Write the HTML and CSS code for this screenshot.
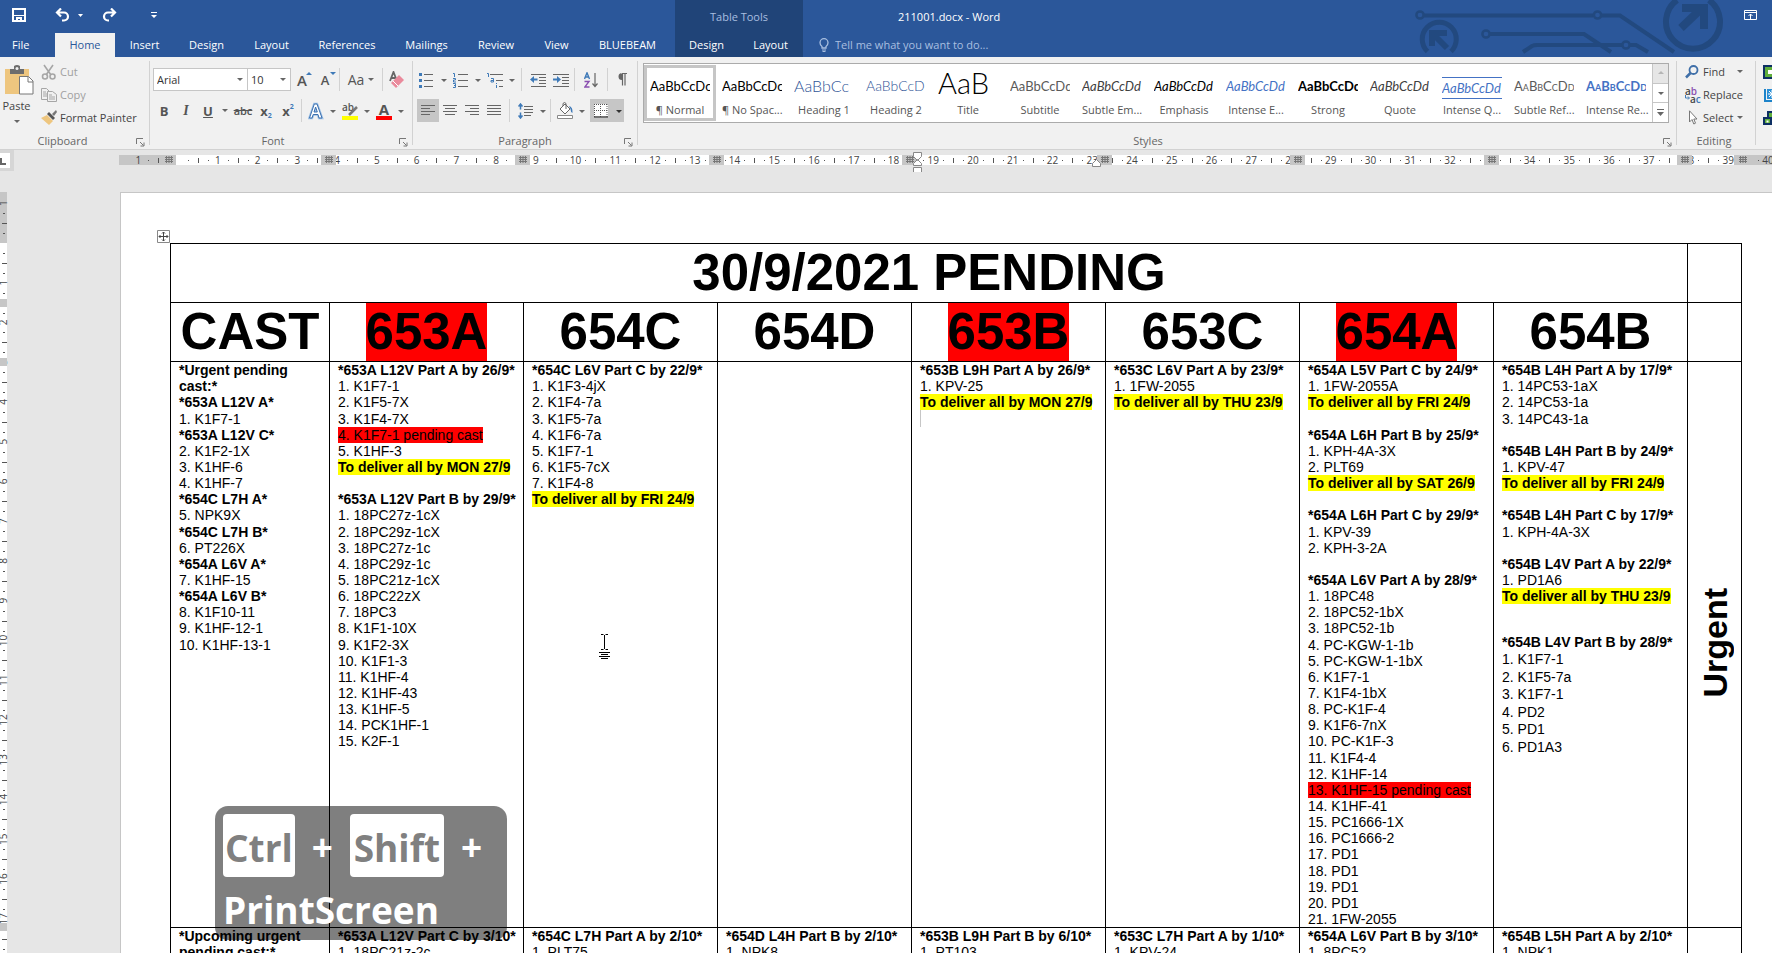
FILE: index.html
```html
<!DOCTYPE html>
<html lang="en">
<head>
<meta charset="utf-8">
<title>211001.docx - Word</title>
<link rel="stylesheet" href="styles.css">
</head>
<body>
<header class="top">
  <svg class="circuit" width="362" height="57" viewBox="0 0 362 57" fill="none" stroke="#22497f" aria-hidden="true">
    <g stroke-width="4">
      <circle cx="10" cy="15" r="3.6" stroke-width="2.5"/><path d="M14 15.500H183"/><circle cx="187.500" cy="15" r="3.600" stroke-width="2.500"/><path d="M191 15.500H210L264 52"/>
      <circle cx="76" cy="34" r="3.600" stroke-width="2.500"/><path d="M80 34H174L201 52"/>
      <path d="M113 52L122 46Q124 45 127 45H212"/><circle cx="216" cy="45" r="3.600" stroke-width="2.500"/><path d="M220 45H226L238 52"/>
    </g>
    <path d="M17.500 51.500A17 17 0 1 1 41 51.500" stroke-width="5"/>
    <path d="M37 48L23 34M22 46V33H37" stroke-width="6"/>
    <path d="M267 0A27 27 0 1 0 299 0" stroke-width="6"/>
    <path d="M271 28L293 7M272 8H294V29" stroke-width="8"/>
  </svg>
  <div class="titlebar">
    <div class="quick">
      <button class="q save" aria-label="Save"><svg width="14" height="14" viewBox="0 0 14 14"><path d="M1 1h12v12H1z" fill="none" stroke="#fff" stroke-width="2"/><path d="M2 7h10v1H2zM4 9h6v4H8v-2H6v2H4z" fill="#fff"/></svg></button>
      <button class="q undo" aria-label="Undo"><svg width="29" height="14" viewBox="0 0 29 14"><path d="M2 4.500H9A4 4 0 0 1 9 12.500H7M6 0.500L2 4.500L6 8.500" fill="none" stroke="#fff" stroke-width="2.200"/><path d="M23 6h5l-2.500 3z" fill="#fff"/></svg></button>
      <button class="q redo" aria-label="Redo"><svg width="15" height="14" viewBox="0 0 15 14"><path d="M13 4.500H6A4 4 0 0 0 6 12.500H7M9 0.500L13 4.500L9 8.500" fill="none" stroke="#fff" stroke-width="2.200"/></svg></button>
      <button class="q" aria-label="Customize Quick Access Toolbar"><svg width="7" height="7" viewBox="0 0 7 7"><path d="M0 0h6v1H0zM0 3h6L3 6z" fill="#fff"/></svg></button>
    </div>
    <div class="context">Table Tools</div>
    <h1 class="doc-title">211001.docx - Word</h1>
    <button class="q display" aria-label="Ribbon Display Options"><svg width="13" height="10" viewBox="0 0 13 10"><path d="M.5.5h12v9H.5zM1 2.500h11M6.500 9V4M4.500 6L6.500 4L8.500 6" fill="none" stroke="#fff"/></svg></button>
  </div>
  <nav class="tabs">
    <button class="file">File</button><button class="active">Home</button><button>Insert</button><button>Design</button><button>Layout</button><button>References</button><button>Mailings</button><button>Review</button><button>View</button><button class="last">BLUEBEAM</button><button class="ctx">Design</button><button class="ctx">Layout</button>
    <label class="tell"><svg width="10" height="14" viewBox="0 0 10 14" fill="none" stroke="#a9bfe0"><path d="M3 10V8.500Q1 7 1 4.700A4 4 0 0 1 9 4.700Q9 7 7 8.500V10z" stroke-width="1.300"/><path d="M3 12h4M3.500 13.500h3"/></svg><input type="text" aria-label="Tell me what you want to do" placeholder="Tell me what you want to do..."></label>
  </nav>
</header>

<section class="ribbon">
  <div class="group clipboard">
    <div class="body clip">
      <button class="paste"><svg width="29" height="31" viewBox="0 0 29 31"><path d="M0 4h24v25H0z" fill="#eec67f"/><path d="M5 4h4V1q3-2 6 0v3h4v5H5z" fill="#6d6d6d"/><circle cx="12" cy="3.500" r="1.500" fill="#f0f0f0"/><path d="M14.500 11.500h9l4.500 4.500v13H14.500z" fill="#fff" stroke="#777"/><path d="M23 12v5h5" fill="none" stroke="#777"/></svg><span>Paste</span><i class="tri"></i></button>
      <div class="stack">
        <button class="dim"><svg width="16" height="16" viewBox="0 0 16 16" fill="none" stroke="#a6a6a6" stroke-width="1.600"><path d="M3 1L10 11M12 1L5 11"/><circle cx="4" cy="12.500" r="2.500"/><circle cx="11.500" cy="12.500" r="2.500"/></svg>Cut</button>
        <button class="dim"><svg width="16" height="16" viewBox="0 0 16 16" fill="#f0f0f0" stroke="#a6a6a6"><path d="M.5 1.500h5l3 3v8h-8z"/><path d="M2 5h3M2 7h4M2 9h4"/><path d="M6.500 4.500h5l4 3v7h-9z"/><path d="M8 8h3M8 10h6M8 12h6"/></svg>Copy</button>
        <button><svg width="16" height="16" viewBox="0 0 16 16"><path d="M0 8l6-3 6 6-4 4z" fill="#eec67f"/><path d="M6 4l2-2 6 6-2 2z" fill="#555"/><path d="M11 4l4-4 1 2-3 4z" fill="#777"/></svg>Format Painter</button>
      </div>
    </div>
    <div class="label">Clipboard<svg class="launch" width="9" height="9" viewBox="0 0 9 9"><path d="M.5 6V.5H7M4 4l3.500 3.500M8 4.500V8H4.500" fill="none" stroke="#777"/></svg></div>
  </div>
  <i class="rule"></i>
  <div class="group font">
    <div class="body rows">
      <div class="row">
        <span class="combo face"><select aria-label="Font"><option>Arial</option></select></span><span class="combo size"><select aria-label="Font size"><option>10</option></select></span>
        <button class="b w22 big" aria-label="Grow font">A<svg class="up" width="6" height="4" viewBox="0 0 6 4"><path d="M0 3L3 0L6 3z" fill="#3f7ab8"/></svg></button>
        <button class="b w24" aria-label="Shrink font">A<svg class="up" width="6" height="4" viewBox="0 0 6 4"><path d="M0 0H6L3 3z" fill="#3f7ab8"/></svg></button>
        <i class="sep"></i>
        <button class="b w38 aa">Aa<i class="tri"></i></button>
        <i class="sep"></i>
        <button class="b w24" aria-label="Clear formatting"><svg width="16" height="18" viewBox="0 0 16 18"><path d="M1 10L4.500 1L8 10M2.500 7H6" fill="none" stroke="#666" stroke-width="1.800"/><path d="M2 12L10 4L15 9L7 17z" fill="#ea8a9c"/><path d="M4 10L9 15" stroke="#fff"/></svg></button>
      </div>
      <div class="row">
        <button class="b w22 strong">B</button><button class="b w22 italic">I</button><button class="b w22 under">U</button><button class="b w12" aria-label="Underline style"><i class="tri"></i></button><button class="b w24 strike">abc</button>
        <button class="b w22 strong">x<sub>2</sub></button><button class="b w22 strong">x<sup>2</sup></button>
        <i class="sep"></i>
        <button class="b split" aria-label="Text effects"><svg width="16" height="18" viewBox="0 0 16 18"><path d="M1.500 16L6.300 2H9L14 16H11L10 12.500H5.200L4 16zM6 10H9.300L7.600 5z" fill="#fff" stroke="#9cc0e6" stroke-width="2.500"/><path d="M1.500 16L6.300 2H9L14 16H11L10 12.500H5.200L4 16zM6 10H9.300L7.600 5z" fill="#fff" stroke="#3b6fae"/></svg><i class="tri"></i></button>
        <button class="b split mark-btn"><span class="hl">ab<svg width="10" height="10" viewBox="0 0 10 10"><path d="M1 9L9 1" stroke="#777" stroke-width="2.500"/></svg></span><i class="tri"></i></button>
        <button class="b split"><span class="fc">A</span><i class="tri"></i></button>
      </div>
    </div>
    <div class="label">Font<svg class="launch" width="9" height="9" viewBox="0 0 9 9"><path d="M.5 6V.5H7M4 4l3.500 3.500M8 4.500V8H4.500" fill="none" stroke="#777"/></svg></div>
  </div>
  <i class="rule"></i>
  <div class="group para">
    <div class="body rows">
      <div class="row first">
        <button class="b split" aria-label="Bullets"><svg width="14" height="16" viewBox="0 0 14 16"><path d="M0 1h3v3H0zM0 7h3v3H0zM0 13h3v3H0z" fill="#3f7ab8"/><path d="M5 2.500h9M5 8.500h9M5 14.500h9" stroke="#666"/></svg><i class="tri"></i></button>
        <button class="b split" aria-label="Numbering"><svg width="15" height="16" viewBox="0 0 15 16"><path d="M0 1.500h1.500V5M0 6.500h2.500v1.500H.5V10h2.500M0 11.500h2.500v4H0M1 13.500h1.500" fill="none" stroke="#3f7ab8"/><path d="M5 2.500h10M5 8.500h10M5 14.500h10" stroke="#666"/></svg><i class="tri"></i></button>
        <button class="b split" aria-label="Multilevel list"><svg width="16" height="16" viewBox="0 0 16 16"><path d="M0 1.500h1.500V5M4 6.500h2.500V10H4V8.500h2M9.500 11v1M9.500 13v3" fill="none" stroke="#3f7ab8"/><path d="M3 2.500h13M9 8.500h7M12 14.500h4" stroke="#666"/></svg><i class="tri"></i></button>
        <i class="sep wide"></i>
        <button class="b w24" aria-label="Decrease indent"><svg width="16" height="14" viewBox="0 0 16 14"><path d="M1 1.500h15M9 4.500h7M9 7.500h7M9 10.500h7M1 13.500h15" stroke="#666"/><path d="M0 6.500L4 3v2.500h3.500v2H4V10z" fill="#3f7ab8"/></svg></button>
        <button class="b w22" aria-label="Increase indent"><svg width="16" height="14" viewBox="0 0 16 14"><path d="M0 1.500h16M9 4.500h7M9 7.500h7M9 10.500h7M0 13.500h16" stroke="#666"/><path d="M8 6.500L4 3v2.500H0v2h4V10z" fill="#3f7ab8"/></svg></button>
        <i class="sep"></i>
        <button class="b w28" aria-label="Sort"><svg width="14" height="16" viewBox="0 0 14 16" fill="none"><path d="M.5 7L3 .8L5.500 7M1.500 5H4.500" stroke="#3f7ab8" stroke-width="1.400"/><path d="M.5 9.500H5L.8 15H5.500" stroke="#8a4fb0" stroke-width="1.400"/><path d="M11 1v13M8.500 11.500L11 14.500L13.500 11.500" stroke="#666" stroke-width="1.200"/></svg></button>
        <i class="sep"></i>
        <button class="b w24" aria-label="Show paragraph marks"><svg width="10" height="13" viewBox="0 0 10 13"><path d="M5 0A3.500 3.500 0 0 0 5 7zM4.500 0H10V1H4.500z" fill="#666"/><path d="M5.500 0v12.500M8 0v12.500" stroke="#666" stroke-width="1.200"/></svg></button>
      </div>
      <div class="row second">
        <button class="b w22 on" aria-label="Align left"><svg width="14" height="11" viewBox="0 0 14 11"><path d="M0 .5h14M0 3.500h9M0 6.500h14M0 9.500h9" stroke="#666"/></svg></button>
        <button class="b w22" aria-label="Center"><svg width="14" height="11" viewBox="0 0 14 11"><path d="M0 .5h14M2 3.500h10M0 6.500h14M2 9.500h10" stroke="#666"/></svg></button>
        <button class="b w22" aria-label="Align right"><svg width="14" height="11" viewBox="0 0 14 11"><path d="M0 .5h14M5 3.500h9M0 6.500h14M5 9.500h9" stroke="#666"/></svg></button>
        <button class="b w22" aria-label="Justify"><svg width="14" height="11" viewBox="0 0 14 11"><path d="M0 .5h14M0 3.500h14M0 6.500h14M0 9.500h14" stroke="#666"/></svg></button>
        <i class="sep wide"></i>
        <button class="b split" aria-label="Line spacing"><svg width="15" height="16" viewBox="0 0 15 16" fill="none"><path d="M2.500 1v5.500M2.500 9.500V15M.5 3.500L2.500 1L4.500 3.500M.5 12.500L2.500 15L4.500 12.500" stroke="#3f7ab8" stroke-width="1.500"/><path d="M6 3.500h9M6 6.500h9M6 9.500h9M6 12.500h7" stroke="#666"/></svg><i class="tri"></i></button>
        <i class="sep"></i>
        <button class="b split" aria-label="Shading"><svg width="17" height="17" viewBox="0 0 17 17"><path d="M3 7L8 2L13 7L8 12z" fill="#fff" stroke="#666"/><path d="M6 4V1.500q1.500-2 3 0V7" fill="none" stroke="#666"/><path d="M12 4q4 1 3.500 7q-2-1-2-4z" fill="#3f7ab8"/><path d="M.5 13.500h15v3H.5z" fill="#fff" stroke="#888"/></svg><i class="tri"></i></button>
        <button class="b split on borders" aria-label="Borders"><svg width="14" height="14" viewBox="0 0 14 14"><path d="M0 0h14v14H0z" fill="#fff"/><path d="M.5 0v13M6.500 0v13M13 0v13M0 .5h14M0 6.500h14" stroke="#555" stroke-dasharray="1 1"/><path d="M0 13h14" stroke="#444" stroke-width="1.500"/></svg><i class="tri dark"></i></button>
      </div>
    </div>
    <div class="label">Paragraph<svg class="launch" width="9" height="9" viewBox="0 0 9 9"><path d="M.5 6V.5H7M4 4l3.500 3.500M8 4.500V8H4.500" fill="none" stroke="#777"/></svg></div>
  </div>
  <i class="rule"></i>
  <div class="group styles">
    <div class="gallery">
      <button class="sel"><span class="s">AaBbCcDc</span><em>¶ Normal</em></button>
      <button><span class="s">AaBbCcDc</span><em>¶ No Spac...</em></button>
      <button><span class="s h1s">AaBbCc</span><em>Heading 1</em></button>
      <button><span class="s h2s">AaBbCcD</span><em>Heading 2</em></button>
      <button><span class="s ts">AaB</span><em>Title</em></button>
      <button><span class="s grey">AaBbCcDd</span><em>Subtitle</em></button>
      <button><span class="s it grey4">AaBbCcDd</span><em>Subtle Em...</em></button>
      <button><span class="s it">AaBbCcDd</span><em>Emphasis</em></button>
      <button><span class="s it blue">AaBbCcDd</span><em>Intense E...</em></button>
      <button><span class="s bd">AaBbCcDd</span><em>Strong</em></button>
      <button><span class="s it grey4">AaBbCcDd</span><em>Quote</em></button>
      <button><span class="s it blue"><u class="lined">AaBbCcDd</u></span><em>Intense Q...</em></button>
      <button><span class="s sc grey">AaBbCcDd</span><em>Subtle Ref...</em></button>
      <button><span class="s sc blue bd">AaBbCcDd</span><em>Intense Re...</em></button>
      <div class="scroll"><button class="off" aria-label="Scroll up"><svg width="6" height="4" viewBox="0 0 6 4"><path d="M0 3h6L3 0z" fill="#b5b5b5"/></svg></button><button aria-label="Scroll down"><i class="tri"></i></button><button aria-label="More styles"><svg width="7" height="7" viewBox="0 0 7 7"><path d="M0 0h7v1H0zM0 3h7L3.500 7z" fill="#666"/></svg></button></div>
    </div>
    <div class="label">Styles<svg class="launch" width="9" height="9" viewBox="0 0 9 9"><path d="M.5 6V.5H7M4 4l3.500 3.500M8 4.500V8H4.500" fill="none" stroke="#777"/></svg></div>
  </div>
  <i class="rule"></i>
  <div class="group editing">
    <div class="stack">
      <button><svg width="14" height="14" viewBox="0 0 14 14" fill="none" stroke="#3f6fa8"><circle cx="8.500" cy="5" r="4" stroke-width="1.800"/><path d="M5.500 8L1 12.500" stroke-width="2.500"/></svg>Find<i class="tri gap"></i></button>
      <button><span class="ic"><b>a<s>b</s></b><b class="ac"><svg width="5" height="5" viewBox="0 0 5 5"><path d="M.5 0v3H4M3 1.500L4.500 3L3 4.500" fill="none" stroke="#3f7ab8"/></svg>a<u>c</u></b></span>Replace</button>
      <button><svg width="14" height="15" viewBox="0 0 14 15"><path d="M4.500.8V12L7 9.500L8.800 14L10.500 13.200L8.800 9H12z" fill="#fff" stroke="#777"/></svg>Select<i class="tri"></i></button>
    </div>
    <div class="label">Editing</div>
  </div>
  <i class="rule"></i>
  <div class="addins">
    <svg width="16" height="16" viewBox="0 0 16 16"><path d="M0 1h16v14H0z" fill="#0d2f63"/><path d="M2 3h14v10H2z" fill="#5fae3b"/><path d="M5 6h11v4H5z" fill="#fff"/></svg>
    <svg width="16" height="16" viewBox="0 0 16 16"><path d="M1 2h2v11h13v2H1z" fill="#1d83c9"/><path d="M4 2h12v10H4z" fill="#2a8fd6"/><path d="M9 3v8M5 7h8M6 4l6 6M12 4L6 10" stroke="#fff"/></svg>
    <svg width="16" height="16" viewBox="0 0 16 16"><path d="M4 1h12v8H4zM0 7h9v8H0z" fill="#0d2f63"/><path d="M6 3h10v4H6zM2 9h5v4H2z" fill="#5fae3b"/><path d="M3.500 10.500h2v2h-2z" fill="#fff"/></svg>
  </div>
</section>

<main class="work">
  <div class="hbar">
    <div class="corner"><svg width="6" height="7" viewBox="0 0 6 7"><path d="M1 0v6h5" fill="none" stroke="#666" stroke-width="2"/></svg></div>
    <svg class="hruler" id="hruler" height="20" aria-hidden="true"></svg>
  </div>
  <div class="canvas">
    <svg class="vruler" id="vruler" width="8" aria-hidden="true"></svg>
    <article class="page">
      <div class="sheet">
        <svg class="handle" width="13" height="13" viewBox="0 0 13 13"><path d="M.5.500h12v12H.5z" fill="#fff" stroke="#888"/><path d="M6.500 2v9M2 6.500h9M5 3.500L6.500 2L8 3.500M5 9.500L6.500 11L8 9.500M3.500 5L2 6.500L3.500 8M9.500 5L11 6.500L9.500 8" fill="none" stroke="#444"/></svg>
        <table>
          <colgroup><col class="c-cast"><col><col><col><col><col><col><col><col class="c-side"></colgroup>
          <tr class="head"><th colspan="8">30/9/2021 PENDING</th><td></td></tr>
          <tr class="head"><th>CAST</th><th><mark class="red">653A</mark></th><th>654C</th><th>654D</th><th><mark class="red">653B</mark></th><th>653C</th><th><mark class="red">654A</mark></th><th>654B</th><td></td></tr>
          <tr class="lines">
            <td><p><b>*Urgent pending</b></p><p><b>cast:*</b></p><p><b>*653A L12V A*</b></p><p>1. K1F7-1</p><p><b>*653A L12V C*</b></p><p>2. K1F2-1X</p><p>3. K1HF-6</p><p>4. K1HF-7</p><p><b>*654C L7H A*</b></p><p>5. NPK9X</p><p><b>*654C L7H B*</b></p><p>6. PT226X</p><p><b>*654A L6V A*</b></p><p>7. K1HF-15</p><p><b>*654A L6V B*</b></p><p>8. K1F10-11</p><p>9. K1HF-12-1</p><p>10. K1HF-13-1</p></td>
            <td><p><b>*653A L12V Part A by 26/9*</b></p><p>1. K1F7-1</p><p>2. K1F5-7X</p><p>3. K1F4-7X</p><p><mark class="red">4. K1F7-1 pending cast</mark></p><p>5. K1HF-3</p><p><mark><b>To deliver all by MON 27/9</b></mark></p><p></p><p><b>*653A L12V Part B by 29/9*</b></p><p>1. 18PC27z-1cX</p><p>2. 18PC29z-1cX</p><p>3. 18PC27z-1c</p><p>4. 18PC29z-1c</p><p>5. 18PC21z-1cX</p><p>6. 18PC22zX</p><p>7. 18PC3</p><p>8. K1F1-10X</p><p>9. K1F2-3X</p><p>10. K1F1-3</p><p>11. K1HF-4</p><p>12. K1HF-43</p><p>13. K1HF-5</p><p>14. PCK1HF-1</p><p>15. K2F-1</p></td>
            <td><p><b>*654C L6V Part C by 22/9*</b></p><p>1. K1F3-4jX</p><p>2. K1F4-7a</p><p>3. K1F5-7a</p><p>4. K1F6-7a</p><p>5. K1F7-1</p><p>6. K1F5-7cX</p><p>7. K1F4-8</p><p><mark><b>To deliver all by FRI 24/9</b></mark></p></td>
            <td></td>
            <td><p><b>*653B L9H Part A by 26/9*</b></p><p>1. KPV-25</p><p><mark><b>To deliver all by MON 27/9</b></mark></p><p class="caret"></p></td>
            <td><p><b>*653C L6V Part A by 23/9*</b></p><p>1. 1FW-2055</p><p><mark><b>To deliver all by THU 23/9</b></mark></p></td>
            <td><p><b>*654A L5V Part C by 24/9*</b></p><p>1. 1FW-2055A</p><p><mark><b>To deliver all by FRI 24/9</b></mark></p><p></p><p><b>*654A L6H Part B by 25/9*</b></p><p>1. KPH-4A-3X</p><p>2. PLT69</p><p><mark><b>To deliver all by SAT 26/9</b></mark></p><p></p><p><b>*654A L6H Part C by 29/9*</b></p><p>1. KPV-39</p><p>2. KPH-3-2A</p><p></p><p><b>*654A L6V Part A by 28/9*</b></p><p>1. 18PC48</p><p>2. 18PC52-1bX</p><p>3. 18PC52-1b</p><p>4. PC-KGW-1-1b</p><p>5. PC-KGW-1-1bX</p><p>6. K1F7-1</p><p>7. K1F4-1bX</p><p>8. PC-K1F-4</p><p>9. K1F6-7nX</p><p>10. PC-K1F-3</p><p>11. K1F4-4</p><p>12. K1HF-14</p><p><mark class="red">13. K1HF-15 pending cast</mark></p><p>14. K1HF-41</p><p>15. PC1666-1X</p><p>16. PC1666-2</p><p>17. PD1</p><p>18. PD1</p><p>19. PD1</p><p>20. PD1</p><p>21. 1FW-2055</p></td>
            <td><p><b>*654B L4H Part A by 17/9*</b></p><p>1. 14PC53-1aX</p><p>2. 14PC53-1a</p><p>3. 14PC43-1a</p><p></p><p><b>*654B L4H Part B by 24/9*</b></p><p>1. KPV-47</p><p><mark><b>To deliver all by FRI 24/9</b></mark></p><p></p><p><b>*654B L4H Part C by 17/9*</b></p><p>1. KPH-4A-3X</p><p></p><p><b>*654B L4V Part A by 22/9*</b></p><p>1. PD1A6</p><p><mark><b>To deliver all by THU 23/9</b></mark></p><div class="loose"><p><b>*654B L4V Part B by 28/9*</b></p><p>1. K1F7-1</p><p>2. K1F5-7a</p><p>3. K1F7-1</p><p>4. PD2</p><p>5. PD1</p><p>6. PD1A3</p></div></td>
            <td class="side"><span>Urgent</span></td>
          </tr>
          <tr class="lines">
            <td><p><b>*Upcoming urgent</b></p><p><b>pending cast:*</b></p></td>
            <td><p><b>*653A L12V Part C by 3/10*</b></p><p>1. 18PC21z-2c</p></td>
            <td><p><b>*654C L7H Part A by 2/10*</b></p><p>1. PLT75</p></td>
            <td><p><b>*654D L4H Part B by 2/10*</b></p><p>1. NPK8</p></td>
            <td><p><b>*653B L9H Part B by 6/10*</b></p><p>1. PT103</p></td>
            <td><p><b>*653C L7H Part A by 1/10*</b></p><p>1. KPV-24</p></td>
            <td><p><b>*654A L6V Part B by 3/10*</b></p><p>1. 8PC52</p></td>
            <td><p><b>*654B L5H Part A by 2/10*</b></p><p>1. NPK1</p></td>
            <td></td>
          </tr>
        </table>
      </div>
    </article>
  </div>
</main>

<svg class="pointer" width="13" height="26" viewBox="0 0 13 26" fill="none" stroke="#000" aria-hidden="true"><path d="M3 .5h2.500M7.500 .5H10M6.500 1v14M3 15.500h2.500M7.500 15.500H10M1 18.500h11M3 20.500h7M1 22.500h11M3 24.500h7"/></svg>
<div class="keys"><div class="krow"><kbd>Ctrl</kbd><span>+</span><kbd class="roomy">Shift</kbd><span>+</span></div><div class="kname">PrintScreen</div></div>
<script src="ruler.js"></script>
</body>
</html>
```
FILE: styles.css
```css
* { box-sizing: border-box; }
body { margin: 0; height: 100vh; display: flex; flex-direction: column; overflow: hidden; position: relative; background: #e6e6e6; font: 11px/16px "Open Sans", "Noto Sans", sans-serif; color: #444; }
button { font: inherit; color: inherit; background: none; border: 0; padding: 0; margin: 0; }
svg { display: block; flex: none; }
i, em { font-style: normal; }

.top { position: relative; background: #2b579a; color: #fff; flex: none; }
.circuit { position: absolute; right: 0; top: 0; }
.titlebar { position: relative; display: flex; height: 33px; }
.quick { width: 675px; display: flex; align-items: center; padding: 0 0 3px 12px; }
.save { margin-right: 29px; }
.undo { margin-right: 18px; }
.redo { margin-right: 34px; }
.context { width: 128px; background: #204478; color: #a9bfe0; text-align: center; line-height: 34px; }
.doc-title { margin: 0 0 0 95px; font-size: 11px; font-weight: 400; line-height: 34px; flex: 1; }
.display { margin-right: 15px; align-self: center; padding-bottom: 3px; }
.tabs { position: relative; display: grid; height: 24px; grid-template-columns: 55px 60px 59px 65px 65px 86px 73px 66px 55px 91px 63px 65px 1fr; line-height: 24px; }
.tabs .file { text-align: left; padding-left: 12px; }
.tabs .active { background: #f1f1f1; color: #2b579a; }
.tabs .last { padding-right: 4px; }
.tabs .ctx { background: #204478; }
.tell { display: flex; align-items: center; gap: 6px; padding-left: 16px; }
.tell input { flex: 1; max-width: 300px; background: none; border: 0; padding: 0; color: #fff; font: inherit; outline: 0; }
.tell input::placeholder { color: #a9bfe0; opacity: 1; }

.ribbon { flex: none; display: flex; height: 93px; background: #f1f1f1; border-bottom: 1px solid #d2d2d2; overflow: hidden; }
.rule { width: 1px; margin: 4px 0; background: #d2d2d2; flex: none; }
.group { display: flex; flex-direction: column; flex: none; }
.label { position: relative; margin-top: auto; text-align: center; color: #666; }
.launch { position: absolute; right: 4px; top: 5px; }
.clipboard { width: 149px; }
.clipboard .label { padding-right: 24px; }
.font { width: 262px; }
.font .label { padding-right: 16px; }
.para { width: 224px; }
.editing { width: 78px; }
.editing .label { padding-right: 4px; }
.styles { flex: 1; min-width: 0; padding: 6px 7px 0 5px; }
.styles .label { padding-right: 16px; }
.styles .launch { right: -3px; }
.clip { display: flex; padding-left: 5px; }
.paste { width: 29px; margin: 8px 7px 0 0; display: flex; flex-direction: column; align-items: center; gap: 2px; }
.paste span { margin-left: -6px; }
.paste .tri { margin: 4px 6px 0 0; }
.stack { display: flex; flex-direction: column; padding-top: 3px; }
.stack button { display: flex; align-items: center; gap: 3px; height: 23px; }
.stack .dim { color: #a0a0a0; }
.tri { display: block; flex: none; width: 0; height: 0; border: 3px solid transparent; border-top: 3px solid #666; border-bottom: 0; }
.tri.dark { border-top-color: #333; }
.rows { display: flex; flex-direction: column; gap: 8px; padding-top: 11px; }
.row { display: flex; height: 23px; padding-left: 3px; }
.row.first { padding-left: 2px; }
.row.second { padding-left: 4px; }
.combo { position: relative; display: block; border: 1px solid #c6c6c6; background: #fff; }
.combo::after { content: ""; position: absolute; right: 4px; top: 9px; border: 3px solid transparent; border-top-color: #666; border-bottom: 0; }
.combo select { appearance: none; width: 100%; height: 21px; border: 0; background: none; padding: 0 0 0 3px; font: inherit; color: #333; outline: 0; }
.face { width: 95px; }
.size { width: 43px; border-left: 0; }
.b { display: flex; align-items: center; justify-content: center; position: relative; font-size: 13px; color: #555; font-weight: 600; flex: none; }
.w12 { width: 12px; } .w22 { width: 22px; } .w24 { width: 24px; } .w28 { width: 28px; } .w38 { width: 38px; }
.big { font-size: 15px; }
.up { position: absolute; right: 1px; top: 4px; }
.aa { gap: 4px; font-weight: 400; font-size: 14px; }
.strong { font-weight: 700; }
.italic { font: italic 700 14px "Liberation Serif", serif; }
.under { text-decoration: underline; font-weight: 700; }
.strike { font-size: 11px; text-decoration: line-through; }
.b sub, .b sup { font-size: 7px; line-height: 7px; color: #3f7ab8; align-self: flex-end; padding-bottom: 3px; }
.b sup { align-self: flex-start; padding: 4px 0 0; }
.split { width: 34px; justify-content: flex-start; padding-left: 4px; }
.split .tri { position: absolute; left: 26px; top: 11px; }
.on { background: #c6c6c6; }
.borders { margin-left: 3px; }
.sep { width: 1px; background: #d2d2d2; margin: 0 2px; flex: none; }
.sep.wide { margin: 0 4px; }
.hl { display: block; position: relative; width: 16px; height: 18px; border-bottom: 4px solid #ff0; font-size: 10px; line-height: 10px; text-align: left; }
.hl svg { position: absolute; left: 6px; top: 4px; }
.fc { display: block; width: 16px; height: 18px; border-bottom: 4px solid #f00; line-height: 14px; font-weight: 700; font-size: 15px; text-align: center; }

.gallery { display: flex; height: 60px; border: 1px solid #ababab; background: #fff; }
.gallery > button { flex: 1; min-width: 0; border: 3px solid transparent; margin: 1px 0; padding: 0 3px; display: flex; flex-direction: column; justify-content: flex-start; overflow: hidden; color: #000; }
.gallery > .sel { border-color: #c6c6c6; }
.s { width: 100%; height: 34px; overflow: hidden; white-space: nowrap; text-align: left; font: 13px/36px Lato, "Open Sans", sans-serif; flex: none; }
.gallery em { color: #555; width: 100%; white-space: nowrap; text-align: center; }
.h1s { font-family: "Lato Light", "Open Sans Light", "Open Sans", sans-serif; font-size: 16px; font-weight: 300; color: #2f5496; }
.h2s { font-family: "Lato Light", "Open Sans Light", "Open Sans", sans-serif; font-size: 14px; font-weight: 300; color: #2f5496; }
.ts { font-family: "Lato Light", "Open Sans Light", "Open Sans", sans-serif; font-size: 29px; font-weight: 300; line-height: 30px; }
.grey { color: #5a5a5a; }
.grey4 { color: #404040; }
.blue { color: #4472c4; }
.it { font-style: italic; }
.bd { font-weight: 700; }
.sc { font-variant: small-caps; }
.lined { display: inline-block; width: 100%; overflow: hidden; vertical-align: middle; line-height: 20px; text-decoration: none; border-top: 1px solid #4472c4; border-bottom: 1px solid #4472c4; }
.scroll { width: 16px; flex: none; display: flex; flex-direction: column; border-left: 1px solid #c6c6c6; }
.scroll button { flex: 1; display: flex; align-items: center; justify-content: center; }
.scroll button + button { border-top: 1px solid #c6c6c6; }
.scroll .off { background: #e6e6e6; }
.editing .stack { padding-left: 8px; }
.editing .stack button { gap: 4px; }
.gap { margin-left: 8px; }
.ic { width: 14px; font-size: 10px; line-height: 8px; display: flex; flex-direction: column; text-align: left; }
.ic b { font-weight: 600; white-space: nowrap; display: flex; }
.ic s, .ic u { text-decoration: none; color: #8a4fb0; }
.ic u { color: #3f7ab8; }
.addins { width: 16px; padding: 7px 0 0 7px; display: flex; flex-direction: column; gap: 7px; flex: none; }

.work { flex: 1; min-height: 0; display: flex; flex-direction: column; overflow: hidden; }
.hbar { height: 42px; flex: none; display: flex; }
.corner { width: 14px; height: 21px; background: #fff; border: solid #d6d6d6; border-width: 3px 4px 3px 0; padding: 5px 0 0; }
.hruler { margin: 2px 0 0 105px; flex: 1; min-width: 0; overflow: hidden; }
.canvas { flex: 1; min-height: 0; display: flex; overflow: hidden; }
.vruler { height: 100%; }
.page { flex: 1; min-width: 0; margin-left: 112px; background: #fff; border: solid #c6c6c6; border-width: 1px 0 0 1px; padding: 50px 30px 0 49px; }
.sheet { position: relative; }
.handle { position: absolute; left: -13px; top: -13px; }
table { width: 100%; table-layout: fixed; border-collapse: collapse; font: 14px/16px "Liberation Sans", Arial, sans-serif; color: #000; }
.c-cast { width: 159px; }
.c-side { width: 54px; }
th, td { border: 1px solid #000; padding: 0; vertical-align: top; }
.head th { font-size: 51px; line-height: 58px; font-weight: 700; }
.lines td { padding: 0 0 0 8px; white-space: nowrap; }
p { margin: 0; height: 16px; }
p:nth-child(7n+4) { height: 17px; line-height: 18px; }
mark { display: inline-block; background: #ff0; color: inherit; line-height: 16px; }
mark.red { background: #f00; }
.head mark { line-height: 58px; }
.loose { padding-top: 30px; }
.loose p { height: 18px; line-height: 16px; }
.loose p:nth-child(odd) { height: 17px; }
.lines .side { padding: 0; vertical-align: middle; text-align: center; }
.side span { display: inline-block; writing-mode: vertical-rl; transform: rotate(180deg); font-weight: 700; font-size: 34px; line-height: 40px; }
.caret { border-left: 1px solid #c6c6c6; }

.pointer { position: absolute; left: 598px; top: 634px; }
.keys { position: absolute; left: 215px; top: 806px; width: 292px; height: 134px; padding: 8px; border-radius: 13px; background: rgba(0, 0, 0, 0.5); color: #fff; font-weight: 700; font-size: 37px; line-height: 50px; }
.krow { display: flex; align-items: center; }
.krow span { width: 58px; padding-top: 3px; text-align: center; }
kbd { background: #fff; color: #808080; border-radius: 4px; font: inherit; line-height: 67px; height: 63px; padding: 0 2px; }
kbd.roomy { padding: 0 4px; }
.kname { margin-top: 8px; }
.hruler text, .vruler text { font: 10px "Open Sans", sans-serif; fill: #444; text-anchor: middle; }
```
FILE: ruler.js
```js
const NS = "http://www.w3.org/2000/svg";
const CM = 39.75;

function add(svg, tag, attrs, text) {
  const el = document.createElementNS(NS, tag);
  for (const k in attrs) el.setAttribute(k, attrs[k]);
  if (text !== undefined) el.textContent = text;
  svg.appendChild(el);
}

// Horizontal ruler: zero sits 59px in, column markers cover the scale.
const h = document.getElementById("hruler");
add(h, "rect", { x: 0, y: 3, width: 1653, height: 10, fill: "#fff" });
add(h, "rect", { x: 0, y: 3, width: 57, height: 10, fill: "#c6c6c6" });
add(h, "rect", { x: 1615, y: 3, width: 38, height: 10, fill: "#c6c6c6" });
for (let n = -1; n <= 40; n++) {
  const x = 59 + n * CM;
  if (n !== 0) add(h, "text", { x: x, y: 12 }, Math.abs(n));
  add(h, "rect", { x: Math.round(x + CM / 4), y: 8, width: 1, height: 1, fill: "#555" });
  add(h, "rect", { x: Math.round(x + CM / 2), y: 6, width: 1, height: 5, fill: "#555" });
  add(h, "rect", { x: Math.round(x + CM * 3 / 4), y: 8, width: 1, height: 1, fill: "#555" });
}
[42, 202, 396, 590, 783, 978, 1171, 1365, 1558, 1616].forEach(function (x) {
  add(h, "rect", { x: x, y: 3, width: 15, height: 10, fill: "#c6c6c6" });
  add(h, "path", { d: "M" + (x + 4) + " 5.5h8M" + (x + 4) + " 7.500h8M" + (x + 4) + " 9.500h8M" + (x + 5.5) + " 4v7M" + (x + 8) + " 4v7M" + (x + 10.5) + " 4v7", stroke: "#777", fill: "none" });
});
const marker = { fill: "#fff", stroke: "#888" };
add(h, "path", Object.assign({ d: "M794.5 .5h8v4l-4 4-4-4zM794.500 13.500v-2l4-4 4 4v2zM794.500 15.500h8v5h-8z" }, marker));
add(h, "path", Object.assign({ d: "M973.500 14.500v-3l4-4 4 4v3z" }, marker));

// Vertical ruler: zero sits 51px below the page top, row markers at the table rows.
const v = document.getElementById("vruler");
add(v, "rect", { x: 0, y: 0, width: 7, height: 800, fill: "#fff" });
add(v, "rect", { x: 0, y: 0, width: 7, height: 51, fill: "#c6c6c6" });
for (let n = -1; n <= 18; n++) {
  const y = 51 + n * CM;
  if (n !== 0) add(v, "text", { x: 0, y: 0, transform: "translate(7 " + y + ") rotate(-90)" }, Math.abs(n));
  add(v, "rect", { x: 3, y: Math.round(y + CM / 4), width: 2, height: 1, fill: "#555" });
  add(v, "rect", { x: 2, y: Math.round(y + CM / 2), width: 5, height: 1, fill: "#555" });
  add(v, "rect", { x: 3, y: Math.round(y + CM * 3 / 4), width: 2, height: 1, fill: "#555" });
}
[107, 166, 731].forEach(function (y) {
  add(v, "rect", { x: 0, y: y, width: 7, height: 8, fill: "#c6c6c6" });
});
```
